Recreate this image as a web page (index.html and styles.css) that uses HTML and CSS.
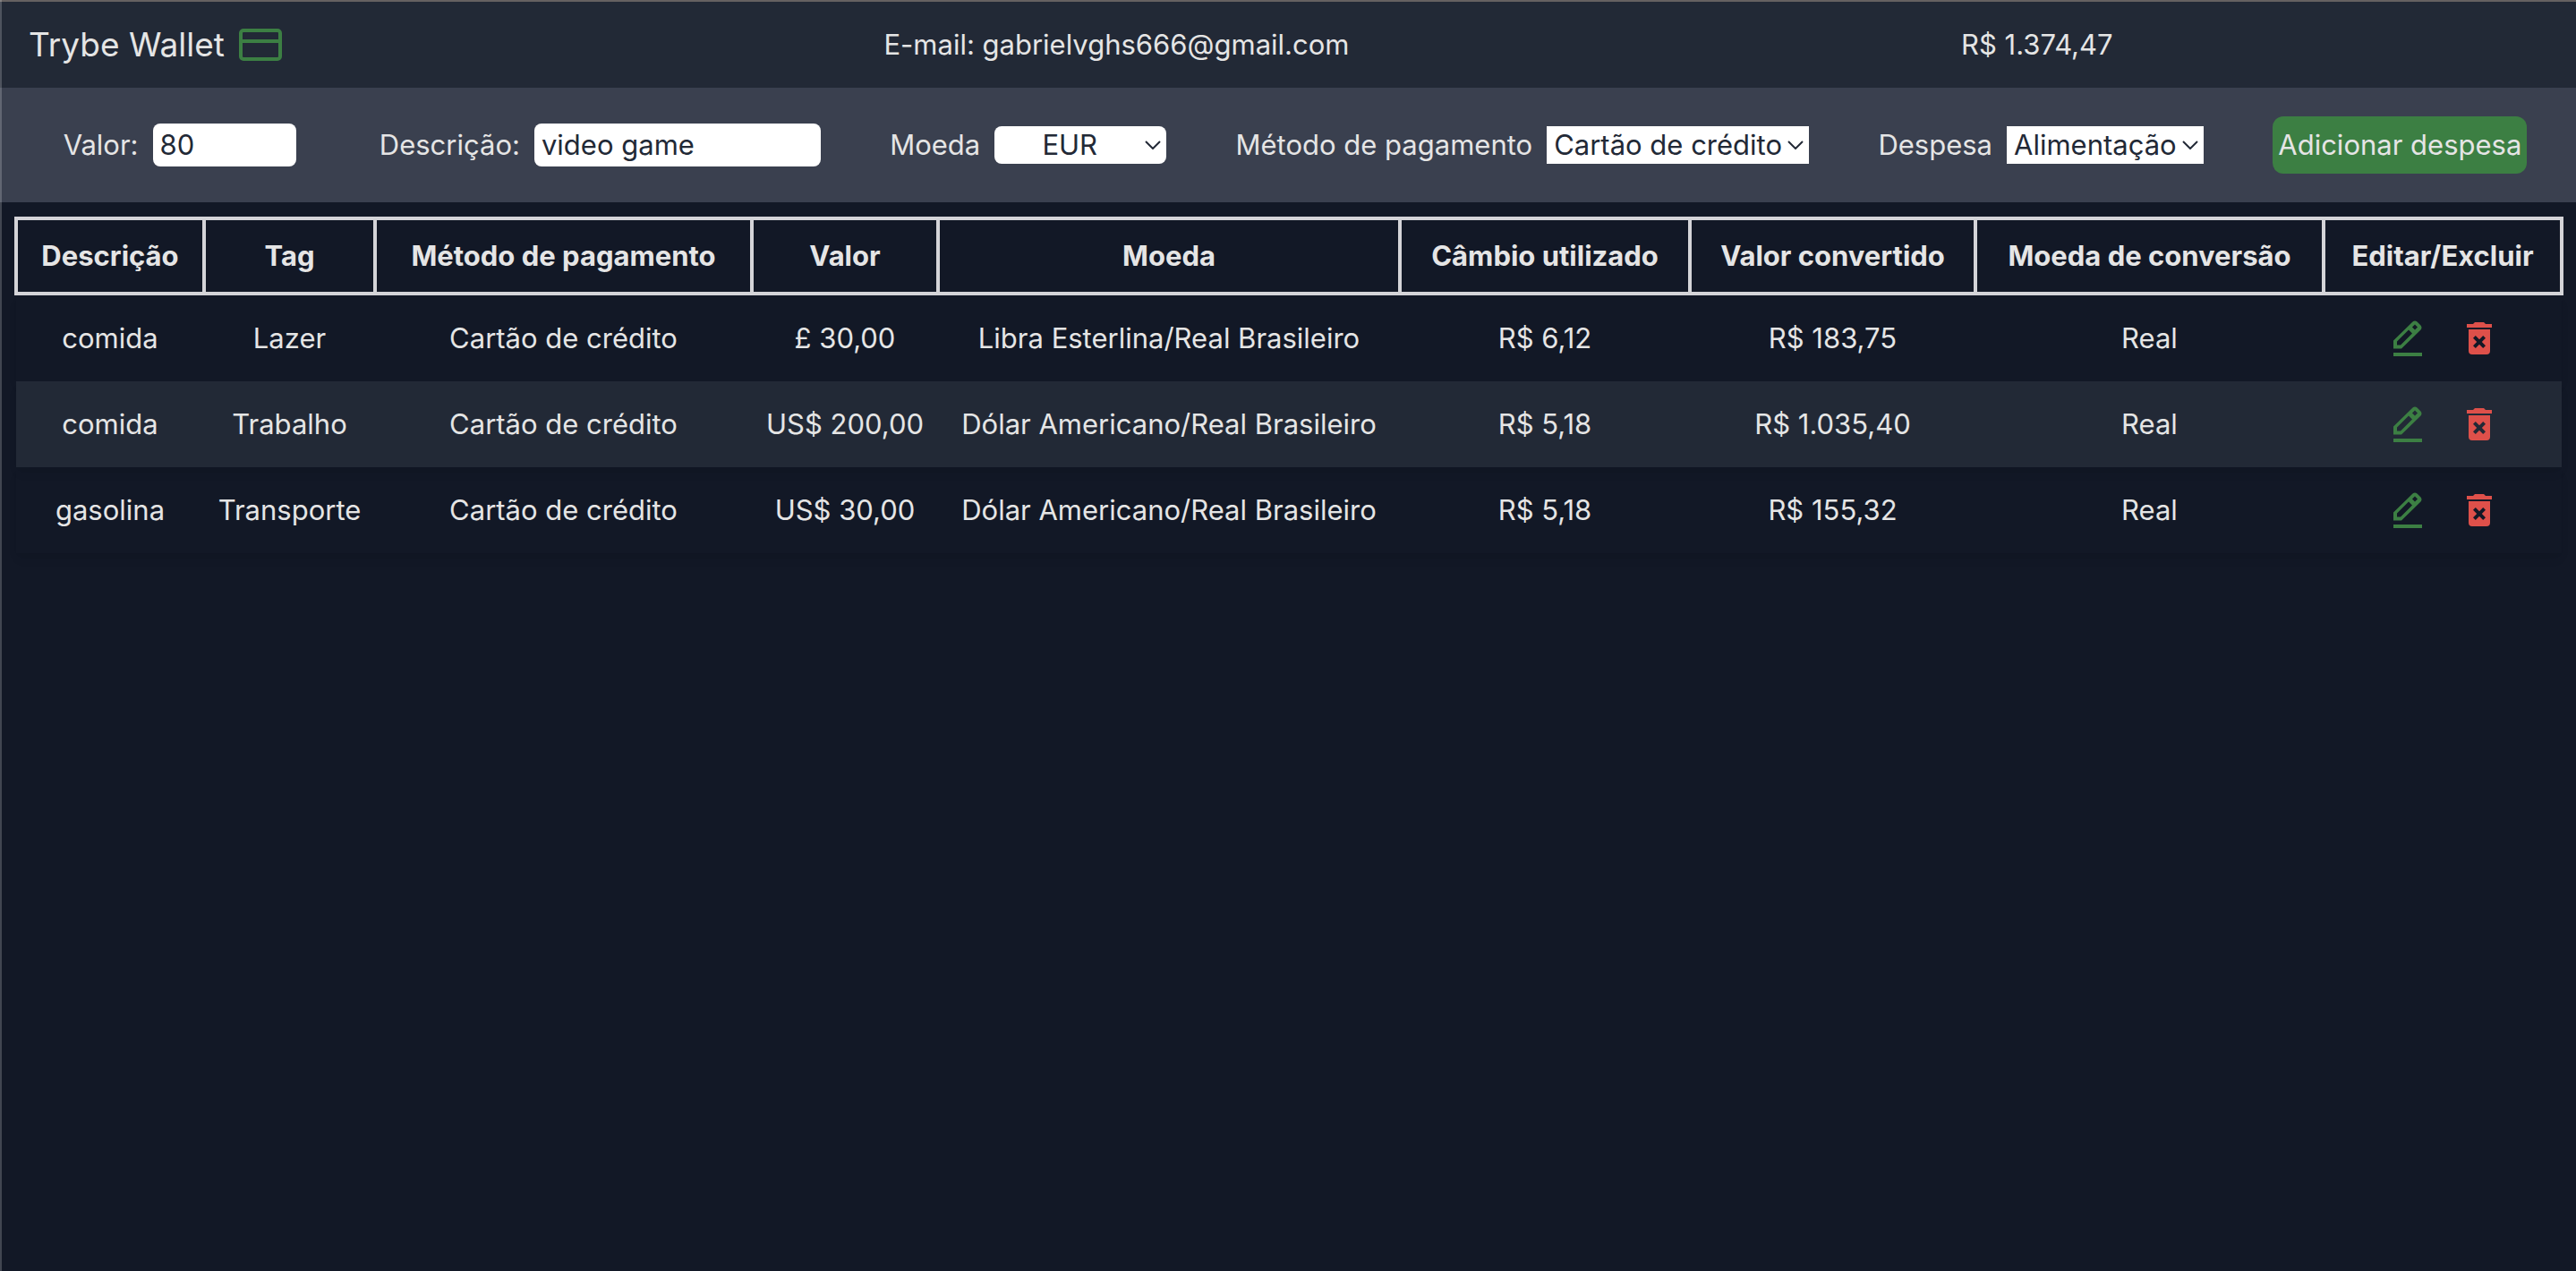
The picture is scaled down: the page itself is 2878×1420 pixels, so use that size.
FILE: index.html
```html
<!DOCTYPE html>
<html lang="pt-BR">
<head>
<meta charset="utf-8">
<meta name="viewport" content="width=device-width, initial-scale=1">
<title>Trybe Wallet</title>
<link rel="stylesheet" href="styles.css">
</head>
<body>
<svg class="sprite" aria-hidden="true">
  <symbol id="chevron" viewBox="0 0 18 10"><path d="M1 1l8 8 8-8" fill="none" stroke="currentColor" stroke-width="2"/></symbol>
  <symbol id="edit" viewBox="0 0 32 40"><path d="M0 31.500V22.500L21.500 1.500a4 4 0 0 1 5 0L30.500 5.500a4 4 0 0 1 0 5L9 31.500zM24 4.500l-3 3 3 3 3-3zM4 23.500V27.500H8L21 14.500 19.500 13 18 11.500 17 10.500z" fill="currentColor" fill-rule="evenodd"/><path d="M0 36h32v4H0z" fill="currentColor"/></symbol>
  <symbol id="trash" viewBox="0 0 28 36"><path d="M0 2h7l2-2h10l2 2h7v4H0zM2 8h24v24a4 4 0 0 1-4 4H6a4 4 0 0 1-4-4zM9.800 15L7 17.800 11.200 22 7 26.200 9.800 29 14 24.800 18.200 29 21 26.200 16.800 22 21 17.800 18.200 15 14 19.200z" fill="currentColor" fill-rule="evenodd"/></symbol>
</svg>

<header class="topbar">
  <h1 class="brand">Trybe Wallet
    <svg class="brand-icon" viewBox="0 0 48 36" aria-hidden="true"><rect x="2" y="2" width="44" height="32" rx="3" fill="none" stroke="currentColor" stroke-width="4"/><path d="M2 14h44" stroke="currentColor" stroke-width="4"/></svg>
  </h1>
  <p class="email">E-mail: gabrielvghs666@gmail.com</p>
  <p class="total">R$ 1.374,47</p>
</header>

<form class="expense-form">
  <label class="field field-value">Valor: <input class="control input-short" type="text" value="80"></label>
  <label class="field">Descrição: <input class="control input-long" type="text" value="video game"></label>
  <label class="field">Moeda
    <span class="select-wrap"><select class="control select currency"><option>EUR</option><option>USD</option><option>GBP</option></select><svg class="chevron" aria-hidden="true"><use href="#chevron"/></svg></span>
  </label>
  <label class="field">Método de pagamento
    <span class="select-wrap"><select class="control select payment"><option>Cartão de crédito</option><option>Cartão de débito</option><option>Dinheiro</option></select><svg class="chevron" aria-hidden="true"><use href="#chevron"/></svg></span>
  </label>
  <label class="field">Despesa
    <span class="select-wrap"><select class="control select category"><option>Alimentação</option><option>Lazer</option><option>Trabalho</option><option>Transporte</option></select><svg class="chevron" aria-hidden="true"><use href="#chevron"/></svg></span>
  </label>
  <button class="submit" type="button">Adicionar despesa</button>
</form>

<main class="content">
  <table class="expenses">
    <colgroup>
      <col class="c-description"><col class="c-tag"><col class="c-method"><col class="c-value"><col class="c-currency"><col class="c-rate"><col class="c-converted"><col class="c-target"><col class="c-actions">
    </colgroup>
    <thead>
      <tr><th>Descrição</th><th>Tag</th><th>Método de pagamento</th><th>Valor</th><th>Moeda</th><th>Câmbio utilizado</th><th>Valor convertido</th><th>Moeda de conversão</th><th>Editar/Excluir</th></tr>
    </thead>
    <tbody>
      <tr><td>comida</td><td>Lazer</td><td>Cartão de crédito</td><td>£ 30,00</td><td>Libra Esterlina/Real Brasileiro</td><td>R$ 6,12</td><td>R$ 183,75</td><td>Real</td>
        <td><div class="actions"><button class="action edit" type="button" aria-label="Editar"><svg><use href="#edit"/></svg></button><button class="action delete" type="button" aria-label="Excluir"><svg><use href="#trash"/></svg></button></div></td></tr>
      <tr><td>comida</td><td>Trabalho</td><td>Cartão de crédito</td><td>US$ 200,00</td><td>Dólar Americano/Real Brasileiro</td><td>R$ 5,18</td><td>R$ 1.035,40</td><td>Real</td>
        <td><div class="actions"><button class="action edit" type="button" aria-label="Editar"><svg><use href="#edit"/></svg></button><button class="action delete" type="button" aria-label="Excluir"><svg><use href="#trash"/></svg></button></div></td></tr>
      <tr><td>gasolina</td><td>Transporte</td><td>Cartão de crédito</td><td>US$ 30,00</td><td>Dólar Americano/Real Brasileiro</td><td>R$ 5,18</td><td>R$ 155,32</td><td>Real</td>
        <td><div class="actions"><button class="action edit" type="button" aria-label="Editar"><svg><use href="#edit"/></svg></button><button class="action delete" type="button" aria-label="Excluir"><svg><use href="#trash"/></svg></button></div></td></tr>
    </tbody>
  </table>
</main>
</body>
</html>
```
FILE: styles.css
```css
*, *::before, *::after { box-sizing: border-box; }

body {
  margin: 0;
  min-height: 100vh;
  background: #121826;
  color: #e5e5e5;
  font: 31px/48px Inter, "Liberation Sans", sans-serif;
  border-top: 2px solid #656161;
}

/* thin light edge along the left side of the window */
body::before {
  content: "";
  position: fixed;
  inset: 0 auto 0 0;
  width: 2px;
  background: rgba(255, 255, 255, 0.2);
}

h1, p { margin: 0; font-size: inherit; font-weight: 400; }

.sprite { position: absolute; width: 0; height: 0; }

.topbar {
  display: grid;
  grid-template-columns: 701fr 1028fr 1028fr;
  align-items: center;
  min-height: 96px;
  padding: 0 88px 0 32px;
  background: #222936;
}

.brand { display: flex; align-items: center; gap: 16px; font-size: 37px; }
.brand-icon { width: 48px; height: 36px; color: #3c7f43; }
.email, .total { text-align: center; }

.expense-form {
  display: flex;
  align-items: center;
  justify-content: space-around;
  min-height: 128px;
  padding: 0 16px;
  background: #3a404f;
}

.field { display: flex; align-items: center; gap: 16px; white-space: nowrap; }
.field-value { margin: 0 16px; }

.control {
  border: 0;
  padding: 0 8px;
  background: #fff;
  color: #222936;
  font: inherit;
}

.input-short, .input-long { height: 48px; border-radius: 8px; }
.input-short { width: 160px; }
.input-long { width: 320px; }

.select-wrap { position: relative; display: flex; }
.select { appearance: none; height: 42px; line-height: 42px; border-radius: 0; }
.currency { width: 192px; padding-right: 32px; border-radius: 8px; text-align: center; text-align-last: center; }
.payment { width: 293px; }
.category { width: 220px; }
.chevron {
  position: absolute;
  right: 6px;
  top: 16px;
  width: 18px;
  height: 10px;
  color: #222936;
  pointer-events: none;
}

.submit {
  height: 64px;
  padding: 0 6px;
  border: 0;
  border-radius: 12px;
  background: #3c7f43;
  color: inherit;
  font: inherit;
  white-space: nowrap;
}

.content { padding: 16px 14px 16px 16px; }

.expenses {
  width: 100%;
  table-layout: fixed;
  border-collapse: collapse;
  text-align: center;
  white-space: nowrap;
}

.c-description { width: 210px; }
.c-tag { width: 191px; }
.c-method { width: 421px; }
.c-value { width: 208px; }
.c-currency { width: 516px; }
.c-rate { width: 324px; }
.c-converted { width: 319px; }
.c-target { width: 389px; }
.c-actions { width: 266px; }

th, td { box-sizing: content-box; padding: 0; }
th { height: 80px; border: 4px solid #d4d4d8; font-weight: 700; }
td { height: 96px; }

tbody tr { box-shadow: 0 8px 12px -2px rgba(0, 0, 0, 0.06), 0 4px 8px -4px rgba(0, 0, 0, 0.06); }
tbody tr:nth-child(even) { background: #222936; }

.actions { display: flex; align-items: center; justify-content: center; gap: 50px; }
.action { display: flex; padding: 0; border: 0; background: none; }
.edit { color: #3c7f43; }
.edit svg { width: 32px; height: 40px; }
.delete { color: #de504a; }
.delete svg { width: 28px; height: 36px; }
```
